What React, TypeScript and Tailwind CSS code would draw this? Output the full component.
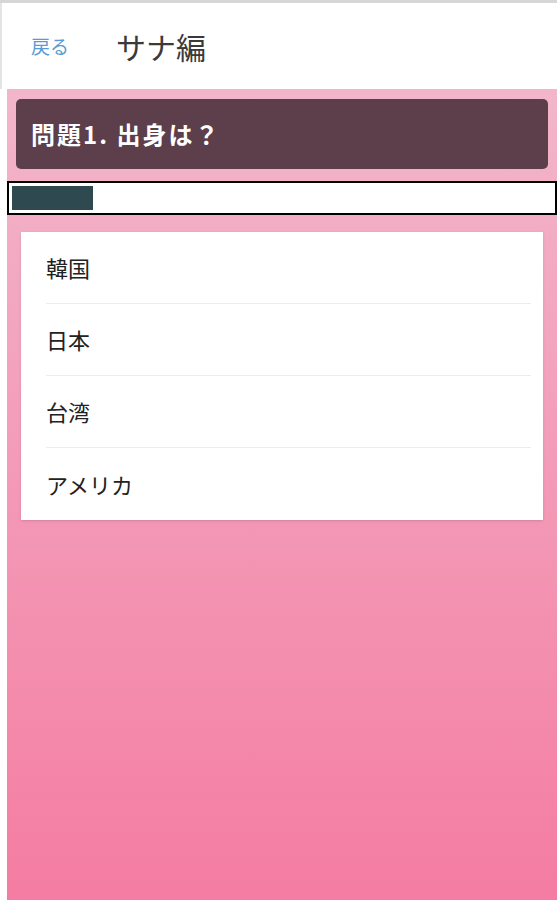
const choices = ['韓国', '日本', '台湾', 'アメリカ']

export default function App() {
  return (
    <div
      className="min-h-[900px] bg-white flex flex-col border-t-[3px] border-[#d6d6d6]"
      style={{ fontFamily: '"Noto Sans CJK JP", "Noto Sans", sans-serif' }}
    >
      {/* header */}
      <div className="h-[86px] flex items-center bg-white border-l-2 border-[#e4e4e4]">
        <span className="ml-[29px] text-[19px] text-[#5a9bd5]">戻る</span>
        <span className="ml-[47px] text-[30px] text-[#3a3a3a]">サナ編</span>
      </div>

      {/* pink body */}
      <div className="flex-1 ml-[7px] bg-gradient-to-b from-[#f2b6ca] via-[#f399b7] to-[#f47ca2] pt-[10px] pb-10">
        <div className="mx-[9px] h-[70px] rounded-[5px] bg-[#5d3f4b] flex items-center px-[15px]">
          <span className="text-[24px] font-bold text-white tracking-[2px]">問題1. 出身は？</span>
        </div>

        <div className="mt-[12px] h-[34px] border-2 border-black bg-white p-[3px]">
          <div className="h-full w-[81px] bg-[#2f4950]" />
        </div>

        <div className="mt-[17px] mx-[14px] bg-white shadow-sm">
          {choices.map((c, i) => (
            <div key={c} className="pl-[25px] pr-[12px]">
              <div
                className={`h-[72px] flex items-center text-[22px] text-[#222] ${
                  i < choices.length - 1 ? 'border-b border-[#ececec]' : ''
                }`}
              >
                {c}
              </div>
            </div>
          ))}
        </div>
      </div>
    </div>
  )
}
